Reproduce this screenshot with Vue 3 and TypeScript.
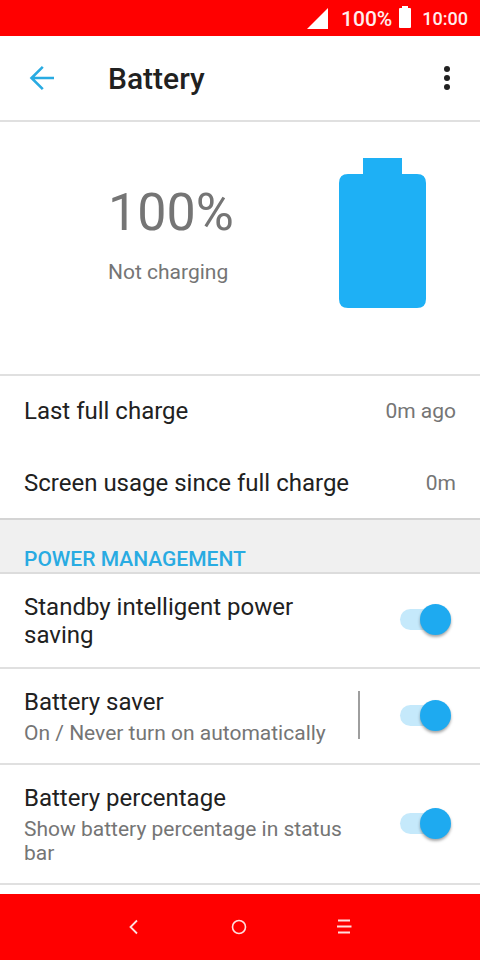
<script setup lang="ts">
import { reactive } from 'vue'

interface Usage {
  label: string
  value: string
}

interface Setting {
  id: string
  title: string
  summary?: string
  split?: boolean
  on: boolean
}

const usage: Usage[] = [
  { label: 'Last full charge', value: '0m ago' },
  { label: 'Screen usage since full charge', value: '0m' },
]

const settings = reactive<Setting[]>([
  { id: 'standby', title: 'Standby intelligent power saving', on: true },
  {
    id: 'saver',
    title: 'Battery saver',
    summary: 'On / Never turn on automatically',
    split: true,
    on: true,
  },
  {
    id: 'percentage',
    title: 'Battery percentage',
    summary: 'Show battery percentage in status bar',
    on: true,
  },
])
</script>

<template>
  <div class="screen">
    <div class="status">
      <svg class="signal" width="22" height="22" viewBox="0 0 22 22" aria-hidden="true">
        <path d="M22 0V21H1Z" fill="currentColor" />
      </svg>
      <span class="level">100%</span>
      <svg class="cell" width="12" height="22" viewBox="0 0 12 22" aria-hidden="true">
        <path
          d="M3 0H9V2H11Q12 2 12 3V21Q12 22 11 22H1Q0 22 0 21V3Q0 2 1 2H3Z"
          fill="currentColor"
        />
      </svg>
      <time class="clock">10:00</time>
    </div>

    <header class="bar">
      <button class="icon back" type="button" aria-label="Back">
        <svg width="26" height="26" viewBox="0 0 26 26" aria-hidden="true">
          <path
            d="M25 13H2.5M13.8 1.8L2.5 13L13.8 24.2"
            fill="none"
            stroke="currentColor"
            stroke-width="2.6"
          />
        </svg>
      </button>
      <h1>Battery</h1>
      <button class="icon more" type="button" aria-label="More options">
        <svg width="6" height="24" viewBox="0 0 6 24" aria-hidden="true">
          <circle cx="3" cy="3" r="3" fill="currentColor" />
          <circle cx="3" cy="12" r="3" fill="currentColor" />
          <circle cx="3" cy="21" r="3" fill="currentColor" />
        </svg>
      </button>
    </header>

    <main>
      <section class="hero">
        <div class="charge">
          <p class="amount">100%</p>
          <p class="state">Not charging</p>
        </div>
        <svg width="87" height="150" viewBox="0 0 87 150" aria-hidden="true">
          <path
            d="M24 0H63V16H78Q87 16 87 25V141Q87 150 78 150H9Q0 150 0 141V25Q0 16 9 16H24Z"
            fill="#1eb0f5"
          />
        </svg>
      </section>

      <dl class="usage">
        <div v-for="item in usage" :key="item.label" class="stat">
          <dt>{{ item.label }}</dt>
          <dd>{{ item.value }}</dd>
        </div>
      </dl>

      <h2>POWER MANAGEMENT</h2>

      <ul class="settings">
        <li v-for="item in settings" :key="item.id" class="setting">
          <label class="text" :class="{ split: item.split }" :for="item.id">
            <span class="title">{{ item.title }}</span>
            <span v-if="item.summary" class="summary">{{ item.summary }}</span>
          </label>
          <input :id="item.id" v-model="item.on" class="switch" type="checkbox" role="switch" />
        </li>
      </ul>
    </main>

    <nav class="keys" aria-label="System">
      <button class="icon" type="button" aria-label="Back">
        <svg width="16" height="16" viewBox="0 0 16 16" aria-hidden="true">
          <path d="M11 1.5L4.5 8L11 14.5" fill="none" stroke="currentColor" stroke-width="1.8" />
        </svg>
      </button>
      <button class="icon" type="button" aria-label="Home">
        <svg width="16" height="16" viewBox="0 0 16 16" aria-hidden="true">
          <circle cx="8" cy="8" r="6.5" fill="none" stroke="currentColor" stroke-width="1.6" />
        </svg>
      </button>
      <button class="icon" type="button" aria-label="Recent apps">
        <svg width="16" height="16" viewBox="0 0 16 16" aria-hidden="true">
          <path
            d="M2 1.5H14M1 7.5H15.5M2 13.5H14"
            fill="none"
            stroke="currentColor"
            stroke-width="1.8"
          />
        </svg>
      </button>
    </nav>
  </div>
</template>

<style>
body {
  margin: 0;
  background: #fff;
}
</style>

<style scoped>
.screen {
  display: flex;
  flex-direction: column;
  min-height: 100vh;
  background: #fff;
  color: #212121;
  font-family: Roboto, sans-serif;
  font-size: 24px;
  line-height: 28px;
}

h1,
h2,
p,
dl,
dd,
ul {
  margin: 0;
  padding: 0;
}

.icon {
  display: flex;
  align-items: center;
  justify-content: center;
  box-sizing: border-box;
  width: 48px;
  height: 48px;
  padding: 0;
  border: 0;
  background: none;
  color: inherit;
}

.status {
  display: flex;
  align-items: center;
  justify-content: flex-end;
  box-sizing: border-box;
  height: 36px;
  padding: 2px 12px 0;
  background: #f00;
  color: #ffeded;
  font-size: 18px;
  font-weight: 500;
}

.signal {
  align-self: flex-start;
  margin: 6px 13px 0 0;
  color: #fff;
}

.level {
  font-size: 21px;
}

.cell {
  align-self: flex-start;
  margin: 4px 11px 0 7px;
  color: #fff;
}

.bar {
  display: flex;
  align-items: center;
  height: 84px;
  padding: 0 9px 0 18px;
  border-bottom: 2px solid #e0e0e0;
}

.back {
  color: #29abe2;
}

h1 {
  flex: 1;
  padding: 2px 0 0 42px;
  font-size: 30px;
  font-weight: 500;
  line-height: 36px;
}

.hero {
  display: flex;
  align-items: flex-start;
  justify-content: space-between;
  padding: 36px 54px 66px 108px;
  border-bottom: 2px solid #e0e0e0;
  color: #757575;
}

.charge {
  display: flex;
  flex-direction: column;
  gap: 17px;
  padding-top: 25px;
}

.amount {
  font-size: 52px;
  line-height: 60px;
}

.state {
  font-size: 21px;
  line-height: 24px;
}

.usage {
  display: flex;
  flex-direction: column;
  gap: 44px;
  padding: 21px 24px;
  border-bottom: 2px solid #d4d4d4;
}

.stat {
  display: flex;
  align-items: center;
  justify-content: space-between;
}

.stat dd {
  color: #757575;
  font-size: 21px;
  line-height: 24px;
}

h2 {
  padding: 27px 24px 1px;
  border-bottom: 2px solid #dcdcdc;
  background: #f0f0f0;
  color: #29abe2;
  font-size: 21px;
  font-weight: 500;
  line-height: 24px;
}

.settings {
  list-style: none;
}

.setting {
  display: flex;
  align-items: center;
  gap: 40px;
  padding: 16px 29px 18px 24px;
  border-bottom: 2px solid #e0e0e0;
}

.text {
  display: flex;
  flex: 1;
  flex-direction: column;
  justify-content: center;
  gap: 5px;
  padding-top: 3px;
}

.split {
  background: linear-gradient(#9e9e9e, #9e9e9e) right center / 2px 48px no-repeat;
}

.summary {
  color: #757575;
  font-size: 21px;
  line-height: 24px;
}

.switch {
  position: relative;
  flex: none;
  appearance: none;
  width: 51px;
  height: 31px;
  margin: 0;
}

.switch::before {
  content: '';
  position: absolute;
  inset: 5px 3px 5px 0;
  border-radius: 11px;
  background: #c5e9fb;
}

.switch::after {
  content: '';
  position: absolute;
  top: 0;
  left: 0;
  width: 31px;
  height: 31px;
  border-radius: 50%;
  background: #fafafa;
  box-shadow: 0 2px 3px rgba(0, 0, 0, 0.35);
}

.switch:checked::after {
  left: 20px;
  background: #1eaaf0;
}

.switch:not(:checked)::before {
  background: #bdbdbd;
}

main {
  flex: 1;
}

.keys {
  display: flex;
  align-items: center;
  justify-content: center;
  gap: 57px;
  height: 66px;
  padding-right: 2px;
  background: #f00;
  color: #ffdede;
}
</style>
